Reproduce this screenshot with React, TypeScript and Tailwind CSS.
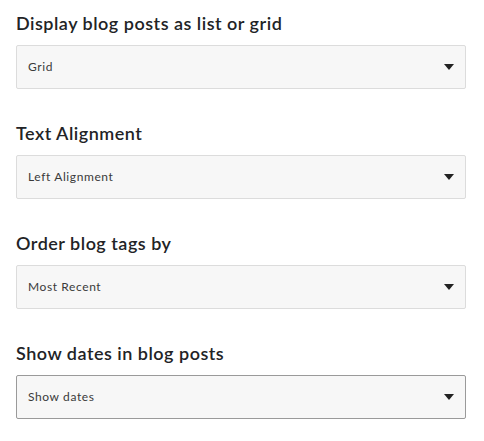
import React from 'react';

interface SettingProps {
  label: string;
  value: string;
  focused?: boolean;
}

const Setting: React.FC<SettingProps> = ({ label, value, focused }) => (
  <div className="flex flex-col">
    <h2 className="text-[18px] leading-6 font-semibold tracking-[0.5px] text-[#222326] mb-[10px]">{label}</h2>
    <div
      className={`w-[450px] h-[44px] flex items-center justify-between pl-[11px] pr-[11px] bg-[#f7f7f7] border rounded-[2px] ${
        focused ? 'border-[#9a9a9a]' : 'border-[#dcdcdc]'
      }`}
    >
      <span className="text-[12px] text-[#3a3a3a] tracking-[0.6px]">{value}</span>
      <svg width="10" height="6" viewBox="0 0 10 6">
        <path d="M0 0 H10 L5 6 Z" fill="#222" />
      </svg>
    </div>
  </div>
);

export default function App() {
  return (
    <div className="bg-white w-[484px] h-[441px] px-4 pt-[11px] flex flex-col gap-8" style={{ fontFamily: 'Lato, "Open Sans", sans-serif' }}>
      <Setting label="Display blog posts as list or grid" value="Grid" />
      <Setting label="Text Alignment" value="Left Alignment" />
      <Setting label="Order blog tags by" value="Most Recent" />
      <Setting label="Show dates in blog posts" value="Show dates" focused />
    </div>
  );
}
